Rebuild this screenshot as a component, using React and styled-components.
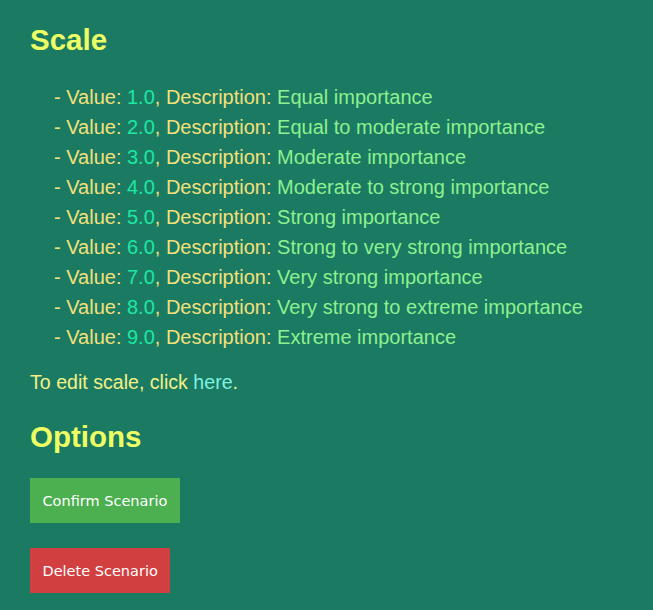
import React from "react";
import styled, { createGlobalStyle } from "styled-components";

const Global = createGlobalStyle`
  html, body { margin: 0; padding: 0; background: #1a7a62; }
  body { font-family: "Liberation Sans", Arial, sans-serif; }
`;

const Page = styled.div`
  min-height: 610px;
  box-sizing: border-box;
  padding: 22px 30px 0 30px;
  background: #1a7a62;
  display: flex;
  flex-direction: column;
  align-items: flex-start;
`;

const Heading = styled.h2`
  margin: 0;
  font-size: 29.5px;
  line-height: 36px;
  font-weight: bold;
  color: #eeff63;
  margin-top: ${(p) => p.$mt || 0}px;
`;

const List = styled.ul`
  list-style: none;
  margin: 24px 0 0 0;
  padding: 0 0 0 24px;
`;

const Item = styled.li`
  font-size: 20px;
  line-height: 30px;
  color: #f3e07a;
  white-space: nowrap;
`;

const Num = styled.span`
  color: #1de8a2;
`;

const Desc = styled.span`
  color: #8ef08e;
`;

const Note = styled.p`
  margin: 15px 0 0 0;
  font-size: 19.6px;
  line-height: 30px;
  color: #f3f088;
`;

const Link = styled.a`
  color: #80f2e2;
  text-decoration: none;
  cursor: pointer;
`;

const Button = styled.button`
  margin-top: ${(p) => p.$mt}px;
  height: 45px;
  padding: 0 12.5px;
  border: none;
  font-family: "DejaVu Sans", Tahoma, sans-serif;
  font-size: 14.5px;
  color: #ffffff;
  background: ${(p) => p.$bg};
  cursor: pointer;
`;

const scale = [
  ["1.0", "Equal importance"],
  ["2.0", "Equal to moderate importance"],
  ["3.0", "Moderate importance"],
  ["4.0", "Moderate to strong importance"],
  ["5.0", "Strong importance"],
  ["6.0", "Strong to very strong importance"],
  ["7.0", "Very strong importance"],
  ["8.0", "Very strong to extreme importance"],
  ["9.0", "Extreme importance"],
];

export default function App() {
  return (
    <>
      <Global />
      <Page>
        <Heading>Scale</Heading>
        <List>
          {scale.map(([v, d]) => (
            <Item key={v}>
              - Value: <Num>{v}</Num>, Description: <Desc>{d}</Desc>
            </Item>
          ))}
        </List>
        <Note>
          To edit scale, click <Link>here</Link>.
        </Note>
        <Heading $mt={22}>Options</Heading>
        <Button $mt={23} $bg="#4caf50">Confirm Scenario</Button>
        <Button $mt={25} $bg="#d13f40">Delete Scenario</Button>
      </Page>
    </>
  );
}
